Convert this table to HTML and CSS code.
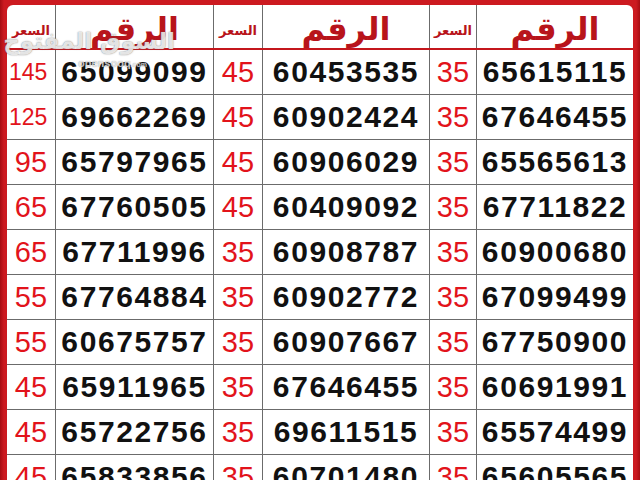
FILE: index.html
```html
<!DOCTYPE html>
<html lang="ar">
<head>
<meta charset="utf-8">
<title>أرقام مميزة</title>
<link rel="stylesheet" href="styles.css">
</head>
<body>
<div class="sheet">
  <div class="grid head">
    <div class="hc price-h">السعر</div>
    <div class="hc num-h">الرقم</div>
    <div class="hc price-h">السعر</div>
    <div class="hc num-h">الرقم</div>
    <div class="hc price-h">السعر</div>
    <div class="hc num-h last">الرقم</div>
  </div>
  <div class="grid body">
    <div class="c p sm">145</div><div class="c n">65099099</div><div class="c p">45</div><div class="c n">60453535</div><div class="c p">35</div><div class="c n last">65615115</div>
    <div class="c p sm">125</div><div class="c n">69662269</div><div class="c p">45</div><div class="c n">60902424</div><div class="c p">35</div><div class="c n last">67646455</div>
    <div class="c p">95</div><div class="c n">65797965</div><div class="c p">45</div><div class="c n">60906029</div><div class="c p">35</div><div class="c n last">65565613</div>
    <div class="c p">65</div><div class="c n">67760505</div><div class="c p">45</div><div class="c n">60409092</div><div class="c p">35</div><div class="c n last">67711822</div>
    <div class="c p">65</div><div class="c n">67711996</div><div class="c p">35</div><div class="c n">60908787</div><div class="c p">35</div><div class="c n last">60900680</div>
    <div class="c p">55</div><div class="c n">67764884</div><div class="c p">35</div><div class="c n">60902772</div><div class="c p">35</div><div class="c n last">67099499</div>
    <div class="c p">55</div><div class="c n">60675757</div><div class="c p">35</div><div class="c n">60907667</div><div class="c p">35</div><div class="c n last">67750900</div>
    <div class="c p">45</div><div class="c n">65911965</div><div class="c p">35</div><div class="c n">67646455</div><div class="c p">35</div><div class="c n last">60691991</div>
    <div class="c p">45</div><div class="c n">65722756</div><div class="c p">35</div><div class="c n">69611515</div><div class="c p">35</div><div class="c n last">65574499</div>
    <div class="c p">45</div><div class="c n">65833856</div><div class="c p">35</div><div class="c n">60701480</div><div class="c p">35</div><div class="c n last">65605565</div>
  </div>
  <div class="watermark">
    <div class="wm-ar">السوق المفتوح</div>
    <div class="wm-en">opensooq<span>.com</span></div>
  </div>
</div>
</body>
</html>
```
FILE: styles.css
```css
html, body {
  margin: 0;
  padding: 0;
  height: 480px;
  overflow: hidden;
}
body {
  background: linear-gradient(to right, #a50d12 0, #cc1a20 4px, #cc1a20 636px, #a50d12 640px);
  font-family: "Liberation Sans", Arial, sans-serif;
}
.sheet {
  position: relative;
  margin: 5px 7px 0 7px;
  width: 626px;
  background: #fff;
  border-radius: 6px 6px 0 0;
}
.grid {
  display: grid;
  grid-template-columns: 49px 158px 49px 167px 47px 156px;
}
.head {
  height: 45px;
  border-bottom: 2px solid #c4161c;
  box-sizing: border-box;
  border-radius: 6px 6px 0 0;
  overflow: hidden;
}
.hc {
  border-right: 1px solid #6b6b6b;
  display: flex;
  justify-content: center;
  color: #b8141b;
  font-family: "DejaVu Sans", sans-serif;
  font-weight: bold;
}
.hc.last { border-right: none; }
.price-h {
  font-size: 13px;
  align-items: flex-end;
  padding-bottom: 10px;
  letter-spacing: -0.5px;
}
.num-h {
  font-size: 32px;
  align-items: center;
  padding-top: 4px;
}
.c {
  height: 45px;
  box-sizing: border-box;
  border-right: 1px solid #6b6b6b;
  border-bottom: 1px solid #6b6b6b;
  display: flex;
  align-items: center;
  justify-content: center;
}
.c.last { border-right: none; }
.p {
  color: #e2131b;
  font-size: 29px;
}
.p.sm {
  font-size: 23px;
  justify-content: flex-start;
  padding-left: 2px;
}
.n {
  color: #111;
  font-size: 30px;
  font-weight: bold;
  letter-spacing: 1.6px;
}
.watermark {
  position: absolute;
  left: 3px;
  top: 20px;
  width: 165px;
  pointer-events: none;
}
.wm-ar {
  font-family: "DejaVu Sans", sans-serif;
  font-weight: bold;
  font-size: 23px;
  white-space: nowrap;
  color: rgba(255, 255, 255, 0.78);
  text-shadow: 0 0 1px rgba(90, 90, 90, 0.6), 0 0 2px rgba(90, 90, 90, 0.4);
  direction: rtl;
  text-align: center;
  line-height: 32px;
}
.wm-en {
  font-size: 11px;
  font-weight: bold;
  color: rgba(255, 255, 255, 0.7);
  text-shadow: 0 0 1px rgba(90, 90, 90, 0.6);
  text-align: center;
  padding-left: 40px;
  margin-top: 0;
}
.wm-en span {
  font-size: 7px;
}
```
